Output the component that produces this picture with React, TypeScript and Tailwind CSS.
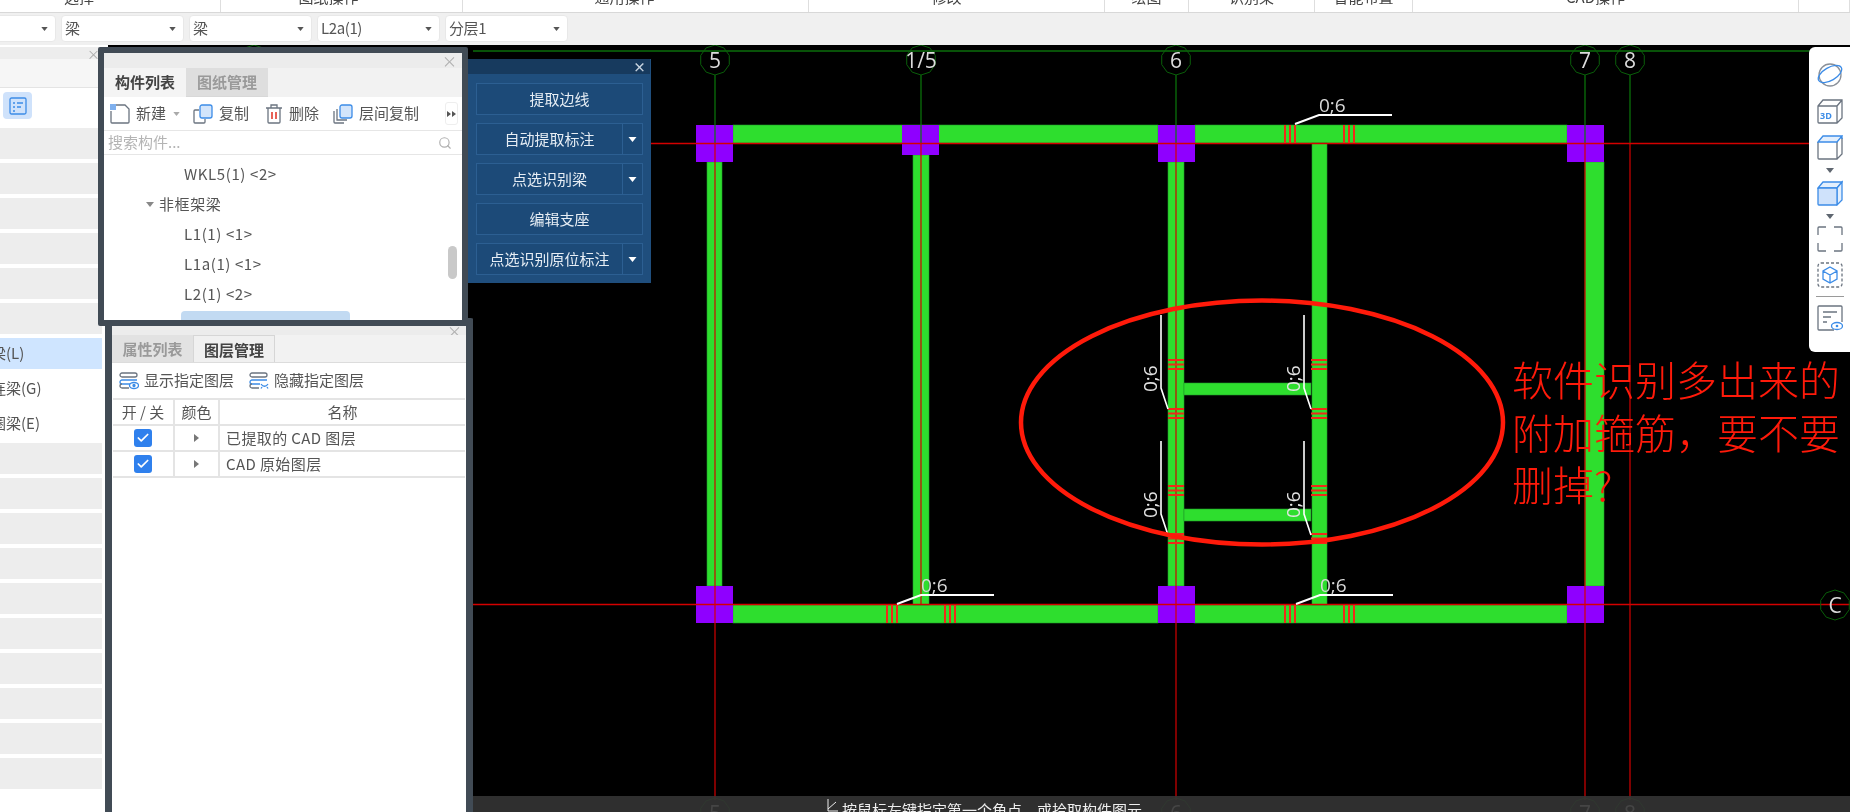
import { Check, Search } from "lucide-react";

const ribbonSections = [
  { label: "选择", width: 221, shift: 62 },
  { label: "图纸操作", width: 242, shift: 26 },
  { label: "通用操作", width: 346, shift: 22 },
  { label: "修改", width: 296, shift: 20 },
  { label: "绘图", width: 84, shift: 0 },
  { label: "识别梁", width: 126, shift: 0 },
  { label: "智能布置", width: 98, shift: 0 },
  { label: "CAD操作", width: 386, shift: 20 },
  { label: "", width: 51, shift: 0 },
];

const selects = [
  { text: "", first: true },
  { text: "梁" },
  { text: "梁" },
  { text: "L2a(1)" },
  { text: "分层1" },
];

const grayRowsTop = [0, 1, 2, 3, 4, 5];
const grayRowsBottom = [0, 1, 2, 3, 4, 5, 6, 7, 8, 9];

const blueButtons = [
  { text: "提取边线", arrow: false },
  { text: "自动提取标注", arrow: true },
  { text: "点选识别梁", arrow: true },
  { text: "编辑支座", arrow: false },
  { text: "点选识别原位标注", arrow: true },
];

const treeRows = [
  { text: "WKL5(1) <2>", indent: 80 },
  { text: "非框架梁", indent: 55, group: true },
  { text: "L1(1) <1>", indent: 80 },
  { text: "L1a(1) <1>", indent: 80 },
  { text: "L2(1) <2>", indent: 80 },
];

const ring = (cx: number, cy: number, r: number) =>
  Array.from({ length: 10 }, (_, i) => {
    const a = (Math.PI / 5) * i + Math.PI / 10;
    return `${cx + r * Math.cos(a)},${cy + r * Math.sin(a)}`;
  }).join(" ");

const Caret = ({ className }: { className: string }) => (
  <svg viewBox="0 0 8 5" className={className}>
    <path d="M0 0h8L4 5z" fill="currentColor" />
  </svg>
);

const AxisMark = ({ x, y, label }: { x: number; y: number; label: string }) => (
  <g>
    <polygon points={ring(x, y, 15)} fill="none" stroke="#0a5f0a" strokeWidth="1" />
    <text x={x} y={y + 8} textAnchor="middle" fontSize="21" fill="#dcdcdc" fontFamily="Open Sans, sans-serif">
      {label}
    </text>
  </g>
);

const Beam = ({ x, y, w, h }: { x: number; y: number; w: number; h: number }) => (
  <rect x={x} y={y} width={w} height={h} fill="#2ede2e" stroke="#1f9a2a" strokeWidth="0.6" />
);

const Column = ({ x, y, h = 37 }: { x: number; y: number; h?: number }) => (
  <rect x={x} y={y} width={37} height={h} fill="#8f00ff" />
);

const StirrupsV = ({ x, y }: { x: number; y: number }) => (
  <g fill="#f02a1a">
    <rect x={x} y={y} width="2" height="18" />
    <rect x={x + 5} y={y} width="2" height="18" />
    <rect x={x + 10} y={y} width="2" height="18" />
  </g>
);

const StirrupsH = ({ x, y }: { x: number; y: number }) => (
  <g fill="#f02a1a">
    <rect x={x} y={y} width="16" height="2" />
    <rect x={x} y={y + 4.5} width="16" height="2" />
    <rect x={x} y={y + 9} width="16" height="2" />
  </g>
);

const FlatLabel = ({ x, y }: { x: number; y: number }) => (
  <g>
    <polyline points={`${x},${y} ${x + 24},${y - 9} ${x + 97},${y - 9}`} fill="none" stroke="#fff" strokeWidth="2" />
    <text x={x + 24} y={y - 12} fontSize="19" fill="#d8d8d8" fontFamily="Open Sans, sans-serif">
      0;6
    </text>
  </g>
);

const SideLabel = ({ x, y }: { x: number; y: number }) => (
  <g>
    <polyline points={`${x},${y} ${x},${y + 73} ${x + 7},${y + 94}`} fill="none" stroke="#fff" strokeWidth="1.6" />
    <text
      transform={`translate(${x - 4} ${y + 77}) rotate(-90)`}
      fontSize="19"
      fill="#e4e4e4"
      fontFamily="Open Sans, sans-serif"
    >
      0;6
    </text>
  </g>
);

const Drawing = () => (
  <svg viewBox="108 45 1742 767" className="absolute inset-0 h-full w-full">
    <line x1="473" y1="51" x2="1810" y2="51" stroke="#0b6e0b" strokeWidth="1.4" />
    <polygon points={ring(254, 60, 15)} fill="none" stroke="#0a5f0a" strokeWidth="1" />

    <Beam x={733} y={125} w={425} h={18} />
    <Beam x={1195} y={125} w={372} h={18} />
    <Beam x={733} y={605} w={425} h={18} />
    <Beam x={1194} y={605} w={373} h={18} />
    <Beam x={707} y={162} w={15} h={424} />
    <Beam x={913} y={155} w={16} h={450} />
    <Beam x={1168} y={162} w={16} h={424} />
    <Beam x={1312} y={143} w={15} h={462} />
    <Beam x={1585} y={162} w={19} h={424} />
    <Beam x={1184} y={383} w={127} h={12} />
    <Beam x={1184} y={509} w={127} h={12} />

    <Column x={696} y={125} />
    <Column x={902} y={125} h={30} />
    <Column x={1158} y={125} />
    <Column x={1567} y={125} />
    <Column x={696} y={586} />
    <Column x={1158} y={586} />
    <Column x={1567} y={586} />

    {[715, 921, 1176, 1585, 1630].map((x) => (
      <line key={x} x1={x} y1="75" x2={x} y2="143" stroke="#0b7a0b" strokeWidth="1.2" />
    ))}
    <line x1="473" y1="143.5" x2="1810" y2="143.5" stroke="#d40000" strokeWidth="1.4" />
    <line x1="473" y1="604.5" x2="1850" y2="604.5" stroke="#d40000" strokeWidth="1.4" />
    {[715, 1176, 1585, 1630].map((x) => (
      <line key={x} x1={x} y1="143" x2={x} y2="800" stroke="#d40000" strokeWidth="1.2" />
    ))}
    <line x1="921" y1="143" x2="921" y2="605" stroke="#d40000" strokeWidth="1.2" />

    {[1284, 1343].map((x) => (
      <StirrupsV key={x} x={x} y={125} />
    ))}
    {[886, 944, 1284, 1343].map((x) => (
      <StirrupsV key={x} x={x} y={605} />
    ))}
    {[1168, 1311].map((x) =>
      [359, 408, 485, 533].map((y) => <StirrupsH key={`${x}-${y}`} x={x} y={y} />)
    )}

    <FlatLabel x={1295} y={124} />
    <FlatLabel x={897} y={604} />
    <FlatLabel x={1296} y={604} />
    <SideLabel x={1161} y={315} />
    <SideLabel x={1304} y={315} />
    <SideLabel x={1161} y={441} />
    <SideLabel x={1304} y={441} />

    <AxisMark x={715} y={60} label="5" />
    <AxisMark x={921} y={60} label="1/5" />
    <AxisMark x={1176} y={60} label="6" />
    <AxisMark x={1585} y={60} label="7" />
    <AxisMark x={1630} y={60} label="8" />
    <AxisMark x={1835} y={605} label="C" />
    <AxisMark x={715} y={813} label="5" />
    <AxisMark x={1176} y={813} label="6" />
    <AxisMark x={1585} y={813} label="7" />
    <AxisMark x={1630} y={813} label="8" />

    <ellipse cx="1262" cy="422.5" rx="241" ry="122" fill="none" stroke="#ff1a0a" strokeWidth="4.5" />
  </svg>
);

const LayerIcon = ({ hide }: { hide?: boolean }) => (
  <svg viewBox="0 0 20 18" className="h-[18px] w-[20px]" fill="none" strokeWidth="1.3">
    <rect x="1" y="1" width="17" height="4" rx="2" stroke="#6b7480" />
    <path d="M18 8H3a2 2 0 0 0 0 4h8" stroke="#3c8ce7" />
    <path d="M10 16H3a2 2 0 0 1 0-4" stroke="#6b7480" />
    {hide ? (
      <path d="M12 12c2 3 5 3 7 0M13 15l-1 1.5M18 15l1 1.5" stroke="#3c8ce7" />
    ) : (
      <g stroke="#3c8ce7">
        <ellipse cx="15" cy="13.5" rx="4.5" ry="3" />
        <circle cx="15" cy="13.5" r="1" fill="#3c8ce7" />
      </g>
    )}
  </svg>
);

const CopyIcon = ({ layered }: { layered?: boolean }) => (
  <svg viewBox="0 0 20 20" className="h-[20px] w-[20px]" fill="none" strokeWidth="1.3">
    {layered && <path d="M1 7v11a1 1 0 0 0 1 1h9" stroke="#6b7480" />}
    {!layered && <path d="M6 6H2a1 1 0 0 0-1 1v11a1 1 0 0 0 1 1h9a1 1 0 0 0 1-1v-3" stroke="#6b7480" />}
    {layered && <path d="M4 5v11h10" stroke="#6b7480" />}
    <rect x="7" y="1" width="12" height="13" rx="2" fill="#d3e5fb" stroke="#3c8ce7" />
  </svg>
);

const ToolbarIcons = () => (
  <div className="absolute left-[1809px] top-[47px] flex h-[305px] w-[41px] flex-col items-center rounded-l-md bg-white pt-[15px] shadow-[0_0_2px_rgba(0,0,0,0.4)]">
    <svg viewBox="0 0 26 26" className="h-[26px] w-[26px]" fill="none" strokeWidth="1.3">
      <circle cx="13" cy="13" r="11" stroke="#8a9099" />
      <ellipse cx="13" cy="12" rx="13" ry="6.5" transform="rotate(-30 13 12)" stroke="#3c8ce7" />
    </svg>
    <svg viewBox="0 0 26 26" className="mt-[10px] h-[26px] w-[26px]" fill="none" strokeWidth="1.3" stroke="#6b7480">
      <path d="M1 8l5-6h19v18l-5 5H2a1 1 0 0 1-1-1zM1 8h19v17M20 8l5-6" />
      <text x="3" y="21" fontSize="9" fontWeight="700" fill="#3c8ce7" stroke="none" fontFamily="Open Sans, sans-serif">
        3D
      </text>
    </svg>
    <svg viewBox="0 0 26 26" className="mt-[10px] h-[26px] w-[26px]" fill="none" strokeWidth="1.3">
      <path d="M1 8v16a1 1 0 0 0 1 1h18V8M20 25l5-5V4" stroke="#6b7480" />
      <path d="M1 8l5-6h19l-5 6zM25 2v3" stroke="#3c8ce7" fill="#e3effd" />
    </svg>
    <Caret className="mt-[8px] h-[5px] w-[8px] text-[#5f6670]" />
    <svg viewBox="0 0 26 26" className="mt-[7px] h-[26px] w-[26px]" strokeWidth="1.3" stroke="#3c8ce7">
      <path d="M1 8l5-6h19l-5 6z" fill="#e3effd" />
      <path d="M20 8l5-6v18l-5 5z" fill="#e3effd" />
      <rect x="1" y="8" width="19" height="17" rx="1" fill="#cfe2fb" />
    </svg>
    <Caret className="mt-[8px] h-[5px] w-[8px] text-[#5f6670]" />
    <svg viewBox="0 0 26 26" className="mt-[7px] h-[26px] w-[26px]" fill="none" strokeWidth="1.3" stroke="#6b7480">
      <path d="M1 9V2a1 1 0 0 1 1-1h7M17 1h7a1 1 0 0 1 1 1v7M25 17v7a1 1 0 0 1-1 1h-7M9 25H2a1 1 0 0 1-1-1v-7" />
    </svg>
    <svg viewBox="0 0 26 26" className="mt-[10px] h-[26px] w-[26px]" fill="none" strokeWidth="1.3">
      <rect x="1" y="1" width="24" height="24" rx="3" stroke="#6b7480" strokeDasharray="3 2" />
      <path d="M13 5l7 4v8l-7 4-7-4V9zM6 9l7 4 7-4M13 13v8" stroke="#3c8ce7" />
    </svg>
    <div className="mt-[8px] h-px w-[28px] bg-[#9a9a9a]" />
    <svg viewBox="0 0 26 26" className="mt-[8px] h-[26px] w-[26px]" fill="none" strokeWidth="1.3">
      <path d="M17 25H2a1 1 0 0 1-1-1V2a1 1 0 0 1 1-1h22a1 1 0 0 1 1 1v15" stroke="#6b7480" />
      <path d="M6 7h14M6 12h8M6 17h4" stroke="#6b7480" />
      <ellipse cx="20" cy="21" rx="5.5" ry="3.5" stroke="#3c8ce7" />
      <circle cx="20" cy="21" r="1.3" fill="#3c8ce7" />
    </svg>
  </div>
);

const ComponentPanel = () => (
  <div className="absolute left-[98px] top-[47px] flex h-[279px] w-[370px] flex-col overflow-hidden rounded-[2px] border-[6px] border-[#414b55] bg-white">
    <div className="flex h-[15px] shrink-0 items-center justify-end bg-[#ececec] pr-[5px] text-[15px] leading-none text-[#b0b0b0]">
      ×
    </div>
    <div className="flex h-[29px] shrink-0 bg-[#f2f2f2] text-[15px] font-bold leading-[28px]">
      <div className="w-[82px] bg-[#f4f4f4] text-center text-[#444]">构件列表</div>
      <div className="w-[82px] border-b border-[#d8d8d8] bg-[#dedede] text-center text-[#9a9a9a]">图纸管理</div>
    </div>
    <div className="flex h-[34px] shrink-0 items-center border-b border-[#e6e6e6] pl-[6px] text-[15px] text-[#555]">
      <svg viewBox="0 0 20 20" className="h-[20px] w-[20px]" fill="none">
        <path d="M6 1h9l4 4v13a1 1 0 0 1-1 1H2a1 1 0 0 1-1-1V7" stroke="#6b7480" strokeWidth="1.3" />
        <rect x="0" y="0" width="6" height="6" fill="#7fb0ee" />
      </svg>
      <span className="ml-[6px]">新建</span>
      <Caret className="ml-[7px] h-[4px] w-[7px] text-[#aaa]" />
      <span className="ml-[13px]">
        <CopyIcon />
      </span>
      <span className="ml-[6px]">复制</span>
      <svg viewBox="0 0 18 20" className="ml-[16px] h-[20px] w-[18px]" fill="none" stroke="#6b7480" strokeWidth="1.3">
        <path d="M1 4h16M6 4V1h6v3M3 4v14a1 1 0 0 0 1 1h10a1 1 0 0 0 1-1V4" />
        <path d="M7 8v7M11 8v7" stroke="#e23b2e" strokeWidth="1.6" />
      </svg>
      <span className="ml-[6px]">删除</span>
      <span className="ml-[14px]">
        <CopyIcon layered />
      </span>
      <span className="ml-[6px]">层间复制</span>
      <div className="ml-[26px] flex h-[23px] w-[13px] items-center justify-center rounded-[3px] border border-[#eee]">
        <svg viewBox="0 0 9 6" className="h-[6px] w-[9px]">
          <path d="M0 0l4 3-4 3zM5 0l4 3-4 3z" fill="#555" />
        </svg>
      </div>
    </div>
    <div className="flex h-[24px] shrink-0 items-center justify-between border-b border-[#e6e6e6] pl-[4px] pr-[10px] text-[15px] text-[#b4b4b4]">
      <span>搜索构件...</span>
      <Search className="h-[14px] w-[14px] text-[#b0b0b0]" />
    </div>
    <div className="relative flex-1 pt-[4px] text-[15px] tracking-[0.6px] text-[#555]">
      {treeRows.map((row) => (
        <div key={row.text} className="flex h-[30px] items-center" style={{ paddingLeft: row.indent }}>
          {row.group && <Caret className="mr-[5px] ml-[-13px] h-[5px] w-[8px] text-[#888]" />}
          {row.text}
        </div>
      ))}
      <div className="ml-[77px] mt-[2px] h-[10px] w-[169px] rounded-t-[4px] bg-[#c2daf2]" />
      <div className="absolute right-[5px] top-[91px] h-[33px] w-[9px] rounded-[5px] bg-[#c9c9c9]" />
    </div>
  </div>
);

const LayerPanel = () => (
  <div className="absolute left-[105px] top-[318px] flex h-[500px] w-[368px] flex-col overflow-hidden rounded-[2px] border-x-[7px] border-t-[8px] border-[#414b55] bg-white">
    <div className="flex h-[9px] shrink-0 items-center justify-end bg-[#ececec] pr-[4px] text-[15px] leading-none text-[#b0b0b0]">
      ×
    </div>
    <div className="flex h-[28px] shrink-0 border-b border-[#dcdcdc] bg-[#f2f2f2] text-[15px] font-bold leading-[27px]">
      <div className="w-[81px] bg-[#e2e2e2] text-center text-[#9a9a9a]">属性列表</div>
      <div className="w-[82px] border-x border-t border-[#d6d6d6] bg-[#f0f0f0] text-center text-[#444]">图层管理</div>
    </div>
    <div className="flex h-[35px] shrink-0 items-center pl-[7px] text-[15px] text-[#555]">
      <LayerIcon />
      <span className="ml-[5px]">显示指定图层</span>
      <span className="ml-[15px]">
        <LayerIcon hide />
      </span>
      <span className="ml-[5px]">隐藏指定图层</span>
    </div>
    <div className="mx-px grid grid-cols-[62px_45px_1fr] border-t-2 border-[#e4e4e4] text-[15px] text-[#555]">
      <div className="flex h-[26px] items-center justify-center border-b-2 border-r-2 border-[#e4e4e4]">开 / 关</div>
      <div className="flex h-[26px] items-center justify-center border-b-2 border-r-2 border-[#e4e4e4]">颜色</div>
      <div className="flex h-[26px] items-center justify-center border-b-2 border-[#e4e4e4]">名称</div>
      {["已提取的 CAD 图层", "CAD 原始图层"].map((name) => (
        <div key={name} className="contents">
          <div className="flex h-[26px] items-center justify-center border-b-2 border-r-2 border-[#e4e4e4]">
            <span className="flex h-[18px] w-[18px] items-center justify-center rounded-[3px] bg-[#2f80ed]">
              <Check className="h-[14px] w-[14px] text-white" strokeWidth={3} />
            </span>
          </div>
          <div className="flex h-[26px] items-center justify-center border-b-2 border-r-2 border-[#e4e4e4]">
            <svg viewBox="0 0 5 8" className="h-[8px] w-[5px]">
              <path d="M0 0l5 4-5 4z" fill="#777" />
            </svg>
          </div>
          <div className="flex h-[26px] items-center border-b-2 border-[#e4e4e4] pl-[6px] tracking-[0.4px]">{name}</div>
        </div>
      ))}
    </div>
  </div>
);

const BluePanel = () => (
  <div className="absolute left-[468px] top-[59px] flex h-[224px] w-[183px] flex-col bg-[#1f4e7d] pr-[1px]">
    <div className="flex h-[15px] items-center justify-end bg-[#173a5e] pr-[4px] text-[13px] font-bold leading-none text-[#c8d4e0]">
      ×
    </div>
    <div className="flex flex-col gap-[8px] pl-[8px] pr-[7px] pt-[9px] text-[15px] text-[#e6edf4]">
      {blueButtons.map((btn) => (
        <div key={btn.text} className="flex h-[32px] border border-[#2c5f92] bg-[#1c4a78]">
          <div className="flex flex-1 items-center justify-center">{btn.text}</div>
          {btn.arrow && (
            <div className="flex w-[20px] items-center justify-center border-l border-[#2c5f92]">
              <Caret className="h-[5px] w-[9px] text-white" />
            </div>
          )}
        </div>
      ))}
    </div>
  </div>
);

const Sidebar = () => (
  <div className="flex h-full w-[108px] shrink-0 flex-col bg-white pr-[6px] text-[15px] text-[#555]">
    <div className="mt-[2px] flex h-[12px] shrink-0 items-center justify-end bg-[#ededed] pr-[2px] text-[13px] leading-none text-[#aaa]">
      ×
    </div>
    <div className="h-[29px] shrink-0 border-b border-[#e4e4e4] bg-[#f6f6f6]" />
    <div className="flex h-[40px] shrink-0 items-start pl-[3px] pt-[4px]">
      <div className="flex h-[27px] w-[29px] items-center justify-center rounded-[4px] bg-[#cfe2fb]">
        <svg viewBox="0 0 18 18" className="h-[18px] w-[18px]" fill="none" stroke="#3c8ce7" strokeWidth="1.3">
          <rect x="1" y="1" width="16" height="16" rx="1.5" />
          <path d="M4 6h2M8 6h6M4 10h2M8 10h4M4 14h2" />
        </svg>
      </div>
    </div>
    <div className="flex flex-col gap-[4px]">
      {grayRowsTop.map((n) => (
        <div key={n} className="h-[31px] bg-[#ededed]" />
      ))}
      <div className="flex h-[31px] items-center bg-[#cfe5ff]">
        <span className="-ml-[9px]">梁(L)</span>
      </div>
      <div className="flex h-[31px] items-center">
        <span className="-ml-[9px]">连梁(G)</span>
      </div>
      <div className="flex h-[31px] items-center">
        <span className="-ml-[9px]">圈梁(E)</span>
      </div>
      {grayRowsBottom.map((n) => (
        <div key={n} className="h-[31px] bg-[#ededed]" />
      ))}
    </div>
  </div>
);

export default function App() {
  return (
    <div className="relative flex h-[812px] w-[1850px] flex-col overflow-hidden bg-white font-['Noto_Sans_CJK_SC',sans-serif] blur-[0.4px]">
      <div className="flex h-[12px] shrink-0 overflow-hidden bg-white">
        {ribbonSections.map((s, i) => (
          <div
            key={i}
            className="flex items-end justify-center overflow-hidden border-r border-[#dedede] pb-[8px] text-[15px] leading-none text-[#444]"
            style={{ width: s.width, paddingRight: s.shift }}
          >
            <span className="whitespace-nowrap">{s.label}</span>
          </div>
        ))}
      </div>
      <div className="flex h-[33px] shrink-0 items-start gap-[5px] border-t border-[#d8d8d8] bg-[#f0f0f0] pt-[2px]">
        {selects.map((s, i) => (
          <div
            key={i}
            className={`flex h-[27px] items-center justify-between rounded-[4px] border border-[#e8e8e8] bg-white pl-[3px] pr-[7px] text-[15px] text-[#555] ${
              s.first ? "-ml-[68px] w-[124px]" : "w-[123px]"
            }`}
          >
            <span className="tracking-[-0.4px]">{s.text}</span>
            <Caret className="h-[4px] w-[7px] text-[#555]" />
          </div>
        ))}
      </div>
      <div className="flex min-h-0 flex-1">
        <Sidebar />
        <div className="relative flex-1 bg-black">
          <Drawing />
        </div>
      </div>

      <LayerPanel />
      <BluePanel />
      <ComponentPanel />
      <ToolbarIcons />

      <div className="absolute bottom-0 left-[473px] right-0 h-[16px] overflow-hidden bg-[#343434]/90 pl-[354px] pt-[3px] text-[15px] leading-[22px] text-[#eee]">
        <div className="flex items-start">
          <svg viewBox="0 0 12 14" className="mr-[3px] h-[14px] w-[12px]" fill="none" stroke="#eee" strokeWidth="1">
            <path d="M1 0v12h10M1 10l8-7" />
          </svg>
          按鼠标左键指定第一个角点，或拾取构件图元
        </div>
      </div>

      <div className="absolute left-[1512px] top-[352px] w-[338px] text-[41px] font-light leading-[52.5px] text-[#ff1a0a]">
        <div>软件识别多出来的</div>
        <div>附加箍筋，要不要</div>
        <div>删掉?</div>
      </div>
    </div>
  );
}
